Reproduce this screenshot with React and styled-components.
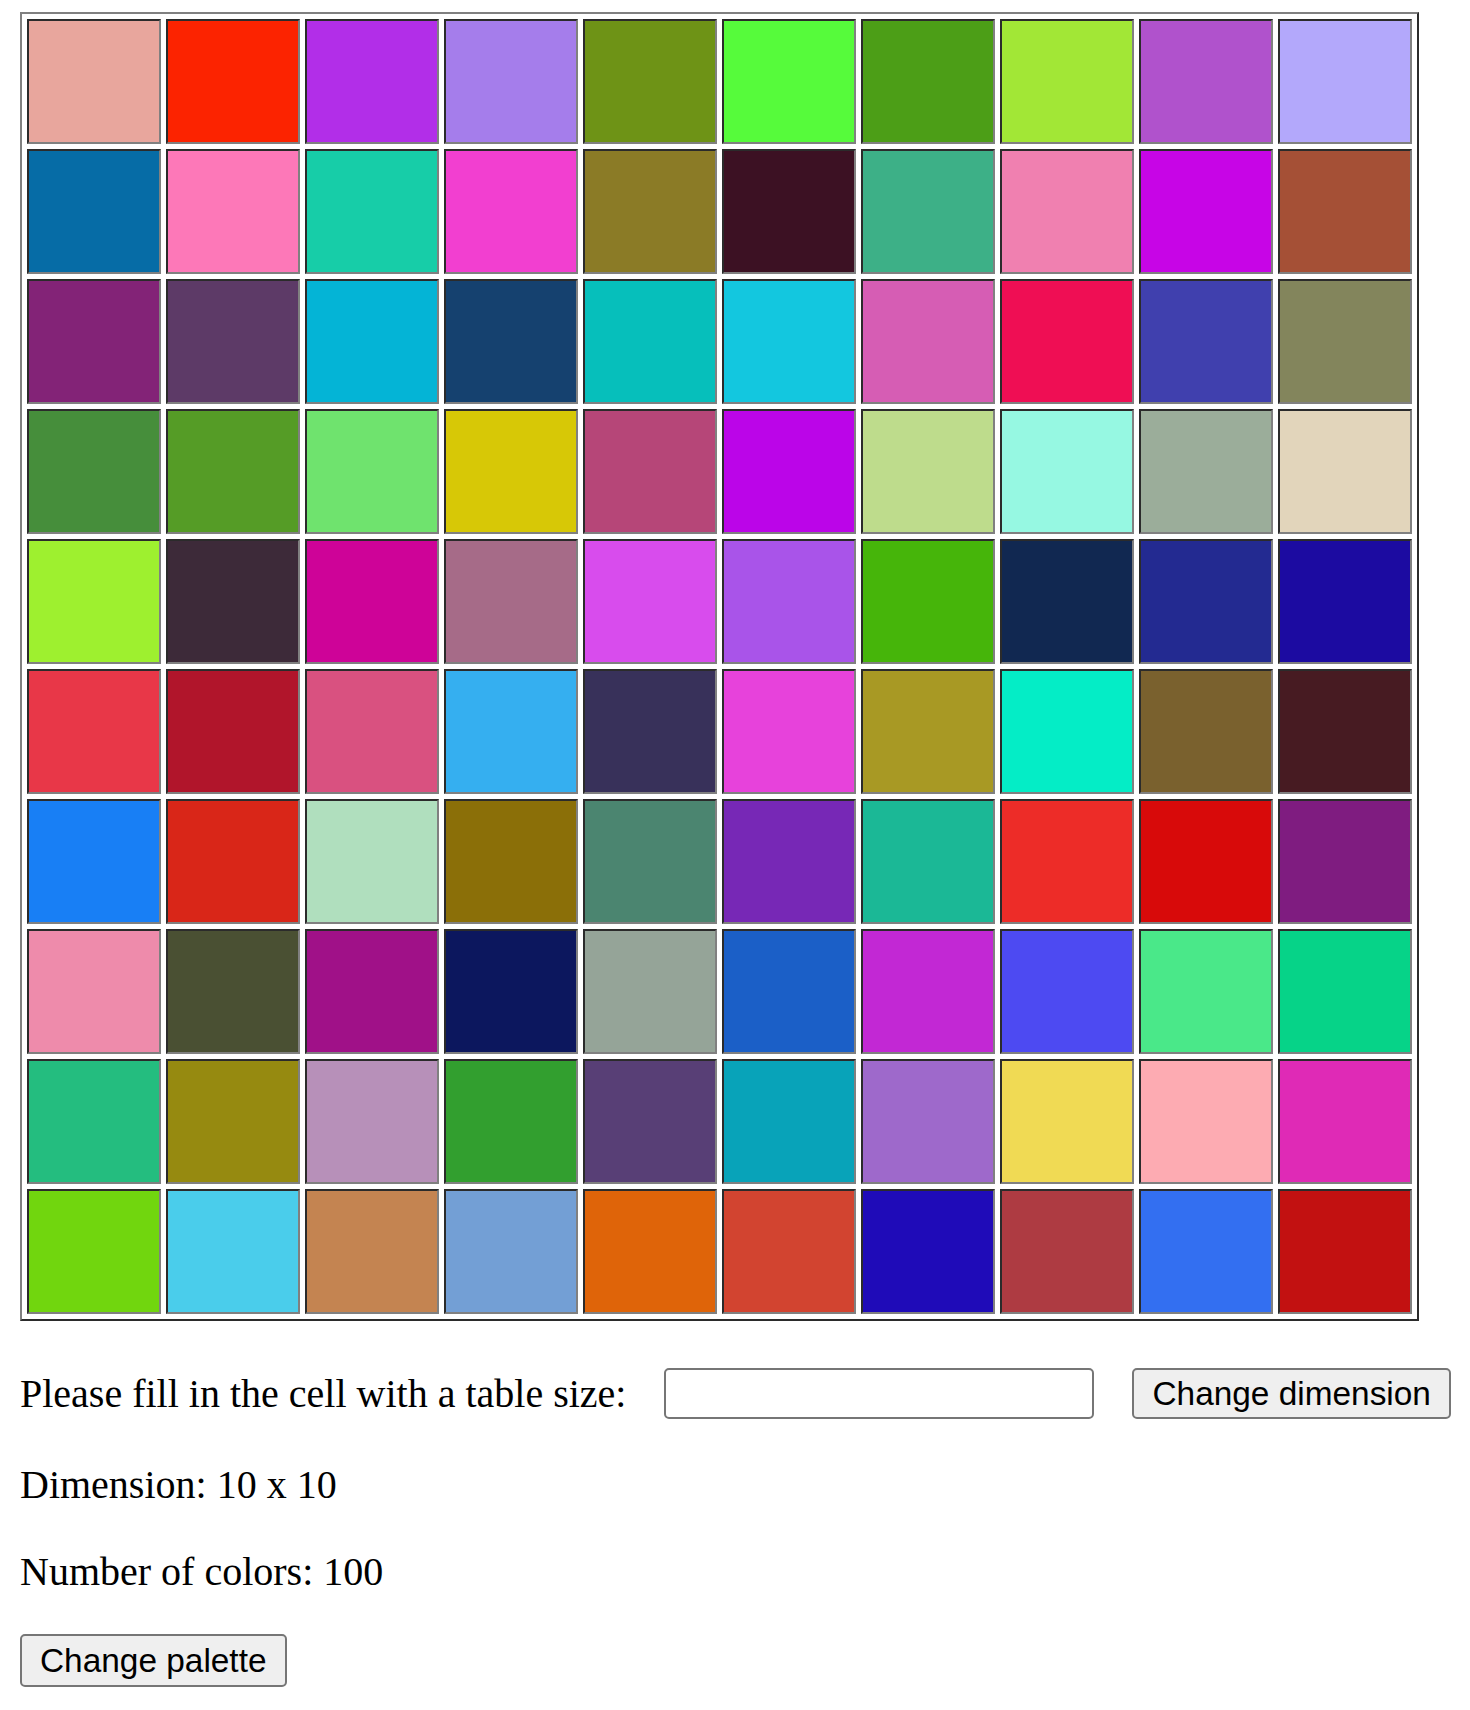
import styled, { createGlobalStyle } from 'styled-components';

const GlobalStyle = createGlobalStyle`
    html, body {
        margin: 0;
        padding: 0;
        background: #ffffff;
    }
`;

const palette = [
    ['#e8a69d', '#fc2300', '#b22ee8', '#a57deb', '#6e9316', '#56fb3b', '#4c9e17', '#a2e736', '#b052cc', '#b3a8fb'],
    ['#066ca6', '#fd78b8', '#17cda8', '#f23fd0', '#8b7b26', '#3c1123', '#3db087', '#f080b0', '#c705e6', '#a55036'],
    ['#832377', '#5d3a67', '#04b4d6', '#15416f', '#06bfbb', '#13c7df', '#d65db4', '#ef0e54', '#4040ae', '#83855c'],
    ['#468e3b', '#559c26', '#6fe36e', '#d7c806', '#b64678', '#bb05e8', '#bedc8c', '#96f8e2', '#9bad9a', '#e2d5bb'],
    ['#9ef02f', '#3d2a39', '#ce0398', '#a66b88', '#d84ced', '#a954e9', '#46b50a', '#112851', '#232a91', '#1c0ba1'],
    ['#e83748', '#b1152b', '#d95180', '#35aff0', '#38315a', '#e742db', '#a89924', '#04edc6', '#7a612e', '#471b22'],
    ['#187ff5', '#d92618', '#b0dfbe', '#8b6f08', '#4b8570', '#7728b6', '#1bb896', '#ed2c28', '#d80a0a', '#7f1c80'],
    ['#ee8bab', '#4a5033', '#a01188', '#0c175e', '#95a498', '#1b5fc7', '#c228d4', '#4d4af2', '#4ae889', '#06d388'],
    ['#24bd7f', '#968a10', '#b790b9', '#329f2f', '#583f76', '#08a3b9', '#9e69cb', '#f0da54', '#fdabb2', '#df2ab6'],
    ['#71d60e', '#4acdeb', '#c48451', '#739fd5', '#df6409', '#d24430', '#1f0bb8', '#ae3b42', '#336ff1', '#c21111'],
];

const Page = styled.div`
    padding: 12px 20px 20px;
    font-family: "Liberation Serif", "Times New Roman", serif;
    font-size: 40px;
    color: #000;
    display: flex;
    flex-direction: column;
    gap: 41px;
    align-items: flex-start;
`;

const ColorTable = styled.table`
    border-collapse: separate;
    border-spacing: 5px;
    border-style: solid;
    border-width: 2px;
    border-color: #808080 #2b2b2b #2b2b2b #808080;
    margin-bottom: 6px;
`;

const Cell = styled.td`
    width: 130px;
    height: 121px;
    padding: 0;
    border-style: solid;
    border-width: 2px;
    border-color: #2b2b2b #808080 #808080 #2b2b2b;
    background: ${(p) => p.$color};
`;

const FormRow = styled.div`
    display: flex;
    align-items: center;
    height: 51px;
    gap: 38px;
    white-space: nowrap;
    margin-bottom: 2px;

    & > * {
        flex-shrink: 0;
    }
`;

const Label = styled.span`
    line-height: 46px;
`;

const SizeInput = styled.input`
    box-sizing: border-box;
    width: 430px;
    height: 51px;
    border: 2px solid #767676;
    border-radius: 5px;
    background: #fff;
    margin: 0;
`;

const Button = styled.button`
    box-sizing: border-box;
    height: ${(p) => p.$height || 51}px;
    padding: 0 18px;
    font-family: "Liberation Sans", Arial, sans-serif;
    font-size: 33.4px;
    white-space: nowrap;
    color: #000;
    background: #efefef;
    border: 2px solid #767676;
    border-radius: 5px;
    margin: ${(p) => p.$offset || 0}px 0 0;
`;

const Line = styled.p`
    margin: 0;
    line-height: 46px;
`;

export default function App() {
    return (
        <>
            <GlobalStyle />
            <Page>
                <ColorTable>
                    <tbody>
                        {palette.map((row, r) => (
                            <tr key={r}>
                                {row.map((c, i) => (
                                    <Cell key={i} $color={c} />
                                ))}
                            </tr>
                        ))}
                    </tbody>
                </ColorTable>
                <FormRow>
                    <Label>Please fill in the cell with a table size:</Label>
                    <SizeInput type="text" />
                    <Button>Change dimension</Button>
                </FormRow>
                <Line>Dimension: 10 x 10</Line>
                <Line>Number of colors: 100</Line>
                <Button $height={53} $offset={-2}>Change palette</Button>
            </Page>
        </>
    );
}
